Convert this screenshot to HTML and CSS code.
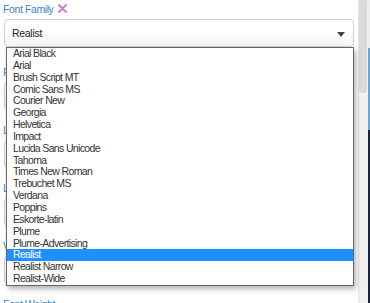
FILE: index.html
```html
<!DOCTYPE html>
<html>

<head>
    <title>Text Settings</title>
    <link rel="stylesheet" href="styles.css">
</head>

<body>
    <div class="panel">
        <div class="field first">
            <div class="label">Font Family
                <svg class="clear" width="9" height="9" viewBox="0 0 9 9">
                    <path d="M1 1 L8 8 M8 1 L1 8" stroke="#c77bd3" stroke-width="1.8" stroke-linecap="round" />
                </svg>
            </div>
            <div class="select">
                <span>Realist</span>
                <span class="arrow"></span>
            </div>
            <ul class="options">
                <li>Arial Black</li>
                <li>Arial</li>
                <li>Brush Script MT</li>
                <li>Comic Sans MS</li>
                <li>Courier New</li>
                <li>Georgia</li>
                <li>Helvetica</li>
                <li>Impact</li>
                <li>Lucida Sans Unicode</li>
                <li>Tahoma</li>
                <li>Times New Roman</li>
                <li>Trebuchet MS</li>
                <li>Verdana</li>
                <li>Poppins</li>
                <li>Eskorte-latin</li>
                <li>Plume</li>
                <li>Plume-Advertising</li>
                <li class="selected">Realist</li>
                <li>Realist Narrow</li>
                <li>Realist-Wide</li>
            </ul>
        </div>
        <div class="field">
            <div class="label">Font Size</div>
            <div class="select"><span>16</span><span class="arrow"></span></div>
        </div>
        <div class="field">
            <div class="label">Line Height</div>
            <div class="select"><span>1.2</span><span class="arrow"></span></div>
        </div>
        <div class="field">
            <div class="label">Letter Spacing</div>
            <div class="select"><span>0</span><span class="arrow"></span></div>
        </div>
        <div class="field">
            <div class="label">Vertical Align</div>
            <div class="select"><span>Top</span><span class="arrow"></span></div>
        </div>
        <div class="field">
            <div class="label">Font Weight</div>
            <div class="select"><span>Normal</span><span class="arrow"></span></div>
        </div>
    </div>
    <div class="scrollbar"><div class="thumb"></div></div>
    <div class="edge"></div>
</body>

</html>
```

FILE: styles.css
```css
body {
    margin: 0;
    height: 303px;
    overflow: hidden;
    display: flex;
    font-family: "Liberation Sans", Arial, sans-serif;
    background: #fff;
}

.panel {
    width: 350px;
    padding: 2px 4px 0 4px;
    position: relative;
}

.field {
    position: relative;
    margin-bottom: 13px;
}

.field.first {
    margin-bottom: 18px;
}

.label {
    margin-left: -1px;
    font-size: 10.5px;
    letter-spacing: -0.4px;
    line-height: 14px;
    height: 14px;
    color: #3a86c8;
    margin-bottom: 3px;
    display: flex;
    align-items: center;
}

.clear {
    margin-left: 5px;
    margin-top: -1px;
}

.select {
    height: 26px;
    border: 1px solid #cfcfcf;
    border-radius: 4px;
    background: linear-gradient(#ffffff 40%, #f3f3f3);
    display: flex;
    align-items: center;
    justify-content: space-between;
    padding: 0 8px 0 7px;
    font-size: 10.5px;
    letter-spacing: -0.3px;
    color: #222;
}

.arrow {
    width: 0;
    height: 0;
    border-top: 5px solid #444;
    border-left: 4px solid transparent;
    border-right: 4px solid transparent;
    margin-top: 2px;
}

.options {
    position: absolute;
    top: 45px;
    left: 2px;
    width: 346px;
    margin: 0;
    padding: 0;
    list-style: none;
    background: #fff;
    border: 1px solid #666;
    box-shadow: 2px 3px 5px rgba(0, 0, 0, 0.3);
    z-index: 2;
}

.options li {
    font-size: 10.5px;
    letter-spacing: -0.65px;
    line-height: 11.85px;
    height: 11.85px;
    padding-left: 6px;
    color: #333;
}

.options li.selected {
    background: #1e90ff;
    color: #fff;
}

.scrollbar {
    width: 10px;
    background: #f1f1f1;
    box-shadow: inset 1px 0 2px rgba(0, 0, 0, 0.06);
}

.thumb {
    margin: 0 1px;
    height: 93px;
    background: #dadada;
    border-radius: 0 0 4px 4px;
}

.edge {
    width: 2px;
    background: linear-gradient(#ececec 0, #ececec 48px, #6aa6d9 48px, #6aa6d9 130px, #1d2140 130px);
}
```
